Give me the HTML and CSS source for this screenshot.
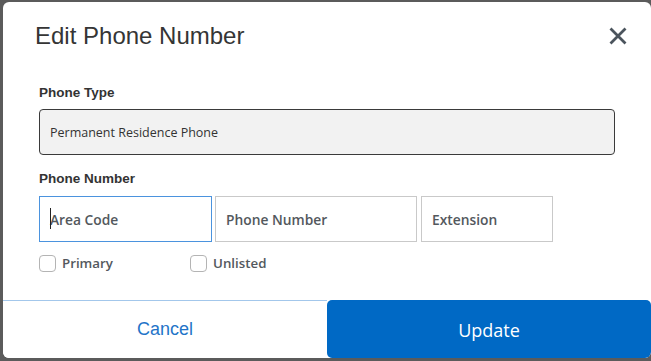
FILE: index.html
```html
<!DOCTYPE html>
<html lang="en">
<head>
<meta charset="utf-8">
<title>Edit Phone Number</title>
<link rel="stylesheet" href="styles.css">
</head>
<body>
<div class="modal">
  <div class="modal-header">
    <h1 class="modal-title">Edit Phone Number</h1>
    <button class="close-btn" aria-label="Close">
      <svg width="18" height="18" viewBox="0 0 18 18"><path d="M1.5 1.5 L16.5 16.5 M16.5 1.5 L1.5 16.5" stroke="#4b545d" stroke-width="2.8" stroke-linecap="butt" fill="none"/></svg>
    </button>
  </div>
  <div class="modal-body">
    <div class="label label-type">Phone Type</div>
    <div class="select-box">Permanent Residence Phone</div>
    <div class="label label-number">Phone Number</div>
    <div class="inputs">
      <div class="field field-area focused"><span class="caret"></span><span class="ph">Area Code</span></div>
      <div class="field field-phone"><span class="ph">Phone Number</span></div>
      <div class="field field-ext"><span class="ph">Extension</span></div>
    </div>
    <div class="checks">
      <label class="check check-primary"><span class="box"></span><span class="check-text">Primary</span></label>
      <label class="check"><span class="box"></span><span class="check-text">Unlisted</span></label>
    </div>
  </div>
  <div class="modal-footer">
    <button class="btn-cancel">Cancel</button>
    <button class="btn-update">Update</button>
  </div>
</div>
</body>
</html>
```
FILE: styles.css
```css
html, body {
  margin: 0;
  padding: 0;
}
body {
  background: #5b5b5b;
  width: 651px;
  height: 361px;
  overflow: hidden;
}
.modal {
  margin: 2px 0 0 3px;
  width: 648px;
  height: 356px;
  background: #ffffff;
  border-radius: 6px;
  display: flex;
  flex-direction: column;
  overflow: hidden;
}
.modal-header {
  display: flex;
  justify-content: space-between;
  align-items: center;
  padding: 20px 24px 0 32px;
  height: 28px;
}
.modal-title {
  margin: 0;
  font-family: "Liberation Sans", Arial, sans-serif;
  font-weight: 400;
  font-size: 24px;
  line-height: 28px;
  color: #353535;
}
.close-btn {
  border: 0;
  background: transparent;
  padding: 0;
  width: 18px;
  height: 18px;
  display: flex;
}
.modal-body {
  padding: 0 36px 0 36px;
  display: flex;
  flex-direction: column;
}
.label {
  font-family: "Liberation Sans", Arial, sans-serif;
  font-weight: 700;
  font-size: 13.5px;
  line-height: 16px;
  color: #333;
}
.label-type {
  margin-top: 35px;
}
.label-number {
  margin-top: 16px;
}
.select-box {
  margin-top: 8px;
  box-sizing: border-box;
  height: 46px;
  border: 1px solid #3a3a3a;
  border-radius: 4px;
  background: #f2f2f2;
  padding-left: 10px;
  display: flex;
  align-items: center;
  font-family: "Open Sans", sans-serif;
  font-size: 12.5px;
  color: #333;
}
.inputs {
  margin-top: 9px;
  display: flex;
}
.field {
  box-sizing: border-box;
  height: 46px;
  border: 1px solid #c9c9c9;
  padding-left: 10px;
  display: flex;
  align-items: center;
  position: relative;
  font-family: "Open Sans", sans-serif;
  font-weight: 600;
  font-size: 13.8px;
  color: #53585d;
}
.field-area {
  width: 173px;
  border-color: #4b93de;
}
.field-phone {
  width: 202px;
  margin-left: 3px;
}
.field-ext {
  width: 132px;
  margin-left: 4px;
}
.caret {
  position: absolute;
  left: 10px;
  top: 11px;
  width: 1px;
  height: 21px;
  background: #222;
}
.checks {
  margin-top: 12px;
  display: flex;
  height: 18px;
  align-items: center;
}
.check {
  display: flex;
  align-items: center;
  font-family: "Open Sans", sans-serif;
  font-weight: 600;
  font-size: 13.3px;
  color: #53585d;
}
.check-primary {
  width: 151px;
}
.box {
  box-sizing: border-box;
  width: 17px;
  height: 17px;
  border: 1px solid #b4b4b4;
  border-radius: 4px;
  background: #fff;
  margin-right: 6px;
}
.modal-footer {
  margin-top: auto;
  display: flex;
  height: 58px;
}
.btn-cancel {
  flex: 0 0 324px;
  border: 0;
  border-top: 1px solid #a3c7eb;
  background: #fff;
  font-family: "Liberation Sans", Arial, sans-serif;
  font-size: 18px;
  color: #1f74c8;
  padding: 0;
}
.btn-update {
  flex: 0 0 324px;
  border: 0;
  border-radius: 5px;
  background: #0069c5;
  color: #fff;
  font-family: "Open Sans", sans-serif;
  font-size: 18px;
  padding: 2px 0 0 0;
}
```
